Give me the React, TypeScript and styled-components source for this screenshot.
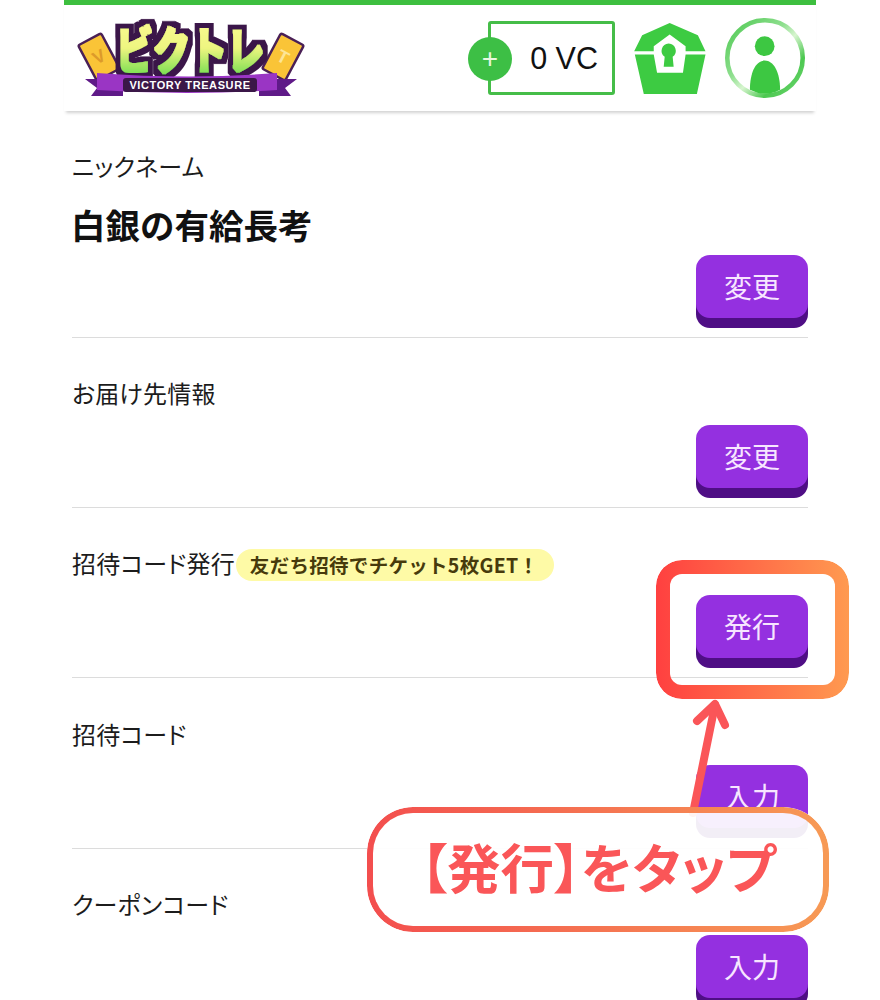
import { FC } from "react";
import styled, { createGlobalStyle } from "styled-components";

const GlobalStyle = createGlobalStyle`
  html, body {
    margin: 0;
    padding: 0;
    background: #ffffff;
  }
  body {
    font-family: "Noto Sans CJK JP", "Liberation Sans", sans-serif;
    color: #1c1c1c;
  }
`;

const Page = styled.div`
  position: relative;
  width: 880px;
  height: 1000px;
  overflow: hidden;
  background: #ffffff;
`;

const Column = styled.main`
  width: 752px;
  margin: 0 auto;
`;

const Header = styled.header`
  height: 106px;
  border-top: 5px solid #3dbf3f;
  padding: 0 10px 0 14px;
  display: flex;
  align-items: center;
  justify-content: space-between;
  box-shadow: 0 4px 3px -2px rgba(0, 0, 0, 0.18);
`;

const LogoMark = styled.svg`
  width: 226px;
  height: 80px;
  overflow: visible;
`;

const HeaderActions = styled.div`
  display: flex;
  align-items: center;
`;

const VcBox = styled.div`
  position: relative;
  box-sizing: border-box;
  width: 127px;
  height: 74px;
  margin-right: 18px;
  border: 3px solid #45bd48;
  border-radius: 3px;
  display: flex;
  align-items: center;
  justify-content: flex-end;
  padding-right: 14px;
  font-family: "Liberation Sans", sans-serif;
  font-size: 30.5px;
  color: #111111;
`;

const PlusBadge = styled.span`
  position: absolute;
  left: -23px;
  top: 13px;
  width: 44px;
  height: 44px;
  border-radius: 50%;
  background: #3dbf45;
  color: #e8f8e0;
  font-size: 28px;
  font-family: "Liberation Sans", sans-serif;
  display: flex;
  align-items: center;
  justify-content: center;
`;

const KeyIcon = styled.svg`
  width: 75px;
  height: 73px;
  margin-right: 16px;
`;

const UserIcon = styled.svg`
  width: 82px;
  height: 82px;
`;

const Row = styled.section`
  margin: 0 8px;
  padding: 38.15px 0 9.5px;
  border-bottom: 1px solid #dcdcdc;
  &:last-child {
    border-bottom: none;
  }
`;

const LabelLine = styled.div`
  display: flex;
  align-items: center;
  height: 33px;
  font-size: 24px;
  line-height: 33px;
  letter-spacing: 0.2px;
  font-feature-settings: "palt";
`;

const Badge = styled.span`
  height: 32px;
  margin: 4px 0 0 1px;
  padding: 0 16px 0 14px;
  border-radius: 16px;
  background: #fefaa6;
  color: #473a0c;
  font-size: 19.5px;
  font-weight: 700;
  line-height: 32px;
  white-space: nowrap;
  letter-spacing: 0.3px;
  font-feature-settings: normal;
`;

const NickName = styled.div`
  margin: 27px 0 0 -1px;
  height: 30px;
  font-size: 34.5px;
  line-height: 30px;
  font-weight: 700;
  color: #111111;
`;

const ButtonLine = styled.div`
  display: flex;
  justify-content: flex-end;
  margin-top: 15.5px;
`;

const PurpleButton = styled.button`
  width: 112px;
  height: 63px;
  margin-bottom: 10px;
  padding: 0;
  border: none;
  border-radius: 14px;
  background: #9430e0;
  box-shadow: 0 10px 0 #4f0f85;
  color: #f7e6ff;
  font-family: inherit;
  font-size: 28px;
  line-height: 63px;
`;

const HighlightFrame = styled.div`
  position: absolute;
  left: 656px;
  top: 560px;
  width: 193px;
  height: 139px;
  box-sizing: border-box;
  padding: 14px;
  border-radius: 26px;
  background: linear-gradient(90deg, #ff4040, #ff9a50);
  -webkit-mask: linear-gradient(#000 0 0) content-box, linear-gradient(#000 0 0);
  -webkit-mask-composite: xor;
  mask-composite: exclude;
`;

const ArrowMark = styled.svg`
  position: absolute;
  left: 680px;
  top: 695px;
  width: 60px;
  height: 125px;
`;

const Callout = styled.div`
  position: absolute;
  left: 367px;
  top: 807px;
  width: 462px;
  height: 125px;
  box-sizing: border-box;
  padding-bottom: 8px;
  border-radius: 46px;
  background: rgba(255, 255, 255, 0.93);
  display: flex;
  align-items: center;
  justify-content: center;
  color: #fa5658;
  font-size: 53.5px;
  font-weight: 700;
  white-space: nowrap;
  font-feature-settings: "palt";

  &::before {
    content: "";
    position: absolute;
    inset: 0;
    box-sizing: border-box;
    padding: 6px;
    border-radius: 46px;
    background: linear-gradient(90deg, #f34e4e, #f79a55);
    -webkit-mask: linear-gradient(#000 0 0) content-box, linear-gradient(#000 0 0);
    -webkit-mask-composite: xor;
    mask-composite: exclude;
  }
`;

const Logo: FC = () => (
  <LogoMark viewBox="0 0 226 80" role="img" aria-label="ビクトレ VICTORY TREASURE">
    <defs>
      <linearGradient id="logoFill" x1="0" y1="0" x2="0" y2="1">
        <stop offset="0" stopColor="#fdfb95" />
        <stop offset="0.5" stopColor="#eef580" />
        <stop offset="1" stopColor="#52d642" />
      </linearGradient>
      <filter id="logoOutline" filterUnits="userSpaceOnUse" x="0" y="-10" width="226" height="90">
        <feMorphology in="SourceGraphic" operator="dilate" radius="1.3" result="fat" />
        <feMorphology in="SourceAlpha" operator="dilate" radius="5.5" result="wide" />
        <feFlood floodColor="#3b1748" />
        <feComposite in2="wide" operator="in" result="edge" />
        <feMerge>
          <feMergeNode in="edge" />
          <feMergeNode in="fat" />
        </feMerge>
      </filter>
    </defs>
    <g transform="rotate(-28 21 39)">
      <rect x="8" y="19" width="26" height="40" rx="2" fill="#fac437" stroke="#4a2056" strokeWidth="2.5" />
      <text x="21" y="45" fontSize="18" fontWeight="700" fill="#dd9a2a" textAnchor="middle" fontFamily="Liberation Sans, sans-serif">V</text>
    </g>
    <g transform="rotate(28 205 39)">
      <rect x="192" y="19" width="26" height="40" rx="2" fill="#fac437" stroke="#4a2056" strokeWidth="2.5" />
      <text x="205" y="45" fontSize="18" fontWeight="700" fill="#fde596" textAnchor="middle" fontFamily="Liberation Sans, sans-serif">T</text>
    </g>
    <text
      x="38"
      y="51"
      fontSize="50"
      fontWeight="900"
      textLength="148"
      lengthAdjust="spacingAndGlyphs"
      fill="url(#logoFill)"
      filter="url(#logoOutline)"
      fontFamily="Noto Sans CJK JP, sans-serif"
    >
      ビクトレ
    </text>
    <path d="M7 61h38v17H13l6-8z" fill="#5f1a88" />
    <path d="M219 61h-38v17h32l-6-8z" fill="#5f1a88" />
    <path d="M19 55q94 7 180 0v17q-90 6-180 0z" fill="#9a35c4" />
    <rect x="45" y="60" width="134" height="14" rx="3" fill="#3b1748" />
    <text
      x="112"
      y="71"
      fontSize="11"
      fontWeight="700"
      fill="#ffffff"
      textAnchor="middle"
      letterSpacing="0.6"
      fontFamily="Liberation Sans, sans-serif"
    >
      VICTORY TREASURE
    </text>
  </LogoMark>
);

const rows = [
  { label: "ニックネーム", action: "変更", nick: "白銀の有給長考" },
  { label: "お届け先情報", action: "変更" },
  { label: "招待コード発行", action: "発行", badge: "友だち招待でチケット5枚GET！" },
  { label: "招待コード", action: "入力" },
  { label: "クーポンコード", action: "入力" },
];

export default function App() {
  return (
    <Page>
      <GlobalStyle />
      <Column>
        <Header>
          <Logo />
          <HeaderActions>
            <VcBox>
              <PlusBadge>+</PlusBadge>0 VC
            </VcBox>
            <KeyIcon viewBox="550 65 225 220">
              <path
                d="M660 68 L745 105 L768 153 L708 153 L708 138 L660 103 L612 138 L612 153 L553 153 L577 105 Z"
                fill="#3dcb42"
              />
              <path
                d="M555 163 L612 163 L622 218 L700 218 L708 163 L768 163 L742 282 L582 282 Z"
                fill="#3dcb42"
              />
              <path
                d="M657 130 a22 22 0 0 1 12 40 l3 30 h-30 l3-30 a22 22 0 0 1 12-40z"
                fill="#3dcb42"
              />
            </KeyIcon>
            <UserIcon viewBox="822 50 250 250">
              <defs>
                <linearGradient id="ringFill" x1="0" y1="0" x2="1" y2="1">
                  <stop offset="0" stopColor="#4cc850" />
                  <stop offset="0.4" stopColor="#8fdf8f" />
                  <stop offset="0.55" stopColor="#d8f5d0" />
                  <stop offset="0.75" stopColor="#4cc850" />
                  <stop offset="1" stopColor="#6fd672" />
                </linearGradient>
              </defs>
              <circle cx="947" cy="175" r="115" fill="none" stroke="url(#ringFill)" strokeWidth="14" />
              <circle cx="946" cy="139" r="30" fill="#3dc742" />
              <path d="M901 272 C901 220 918 183 946 183 C974 183 993 220 993 272 Q947 296 901 272 Z" fill="#3dc742" />
            </UserIcon>
          </HeaderActions>
        </Header>
        {rows.map((row) => (
          <Row key={row.label}>
            <LabelLine>
              {row.label}
              {row.badge && <Badge>{row.badge}</Badge>}
            </LabelLine>
            {row.nick && <NickName>{row.nick}</NickName>}
            <ButtonLine>
              <PurpleButton>{row.action}</PurpleButton>
            </ButtonLine>
          </Row>
        ))}
      </Column>
      <HighlightFrame />
      <ArrowMark viewBox="0 0 60 125" fill="none" stroke="#fa5558" strokeWidth="8" strokeLinecap="round" strokeLinejoin="round">
        <path d="M13 118 L35 10" />
        <path d="M17 26 L35 9 L45 30" />
      </ArrowMark>
      <Callout>【発行】をタップ</Callout>
    </Page>
  );
}
